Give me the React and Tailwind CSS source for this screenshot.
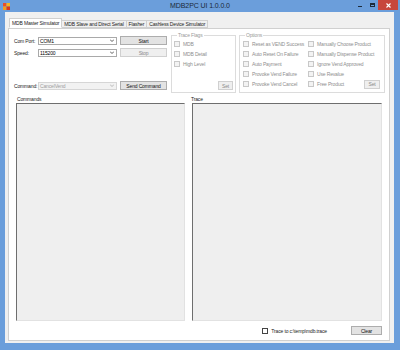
import React from 'react';

const Check = ({ label, disabled }) => (
  <div className="flex items-center gap-[3px] h-[10px] whitespace-nowrap">
    <span className={`w-[6px] h-[6px] border shrink-0 ${disabled ? 'border-[#c8c8c8] bg-[#f3f3f3]' : 'border-[#444] bg-white'}`} />
    <span className={disabled ? 'text-[#8e8e8e]' : 'text-[#222]'}>{label}</span>
  </div>
);

const Combo = ({ value, disabled }) => (
  <div className={`w-[79px] h-[8px] flex items-center justify-between border pl-[1px] pr-[2px] ${disabled ? 'border-[#d6d6d6] bg-[#f2f2f2] text-[#9d9d9d]' : 'border-[#a9a9a9] bg-white text-black'}`}>
    <span>{value}</span>
    <svg width="4" height="3" viewBox="0 0 4 3">
      <path d="M0 0.5 L2 2.5 L4 0.5" fill="none" stroke={disabled ? '#aaa' : '#333'} strokeWidth="0.8" />
    </svg>
  </div>
);

const Btn = ({ children, disabled, className = '' }) => (
  <div className={`flex items-center justify-center border ${disabled ? 'border-[#d0d0d0] bg-[#efefef] text-[#8a8a8a]' : 'border-[#adadad] bg-[#e3e3e3] text-[#111]'} ${className}`}>
    {children}
  </div>
);

const Tab = ({ children, active }) => (
  <div className={`border border-[#d0d0d0] px-[2px] flex items-center whitespace-nowrap ${active ? 'h-[10px] bg-white border-b-white -mb-[1px] relative z-10' : 'h-[8px] mt-[2px] bg-[#f0f0f0] -ml-[1px]'}`}>
    {children}
  </div>
);

export default function App() {
  return (
    <div className="w-[400px] h-[350px] bg-[#6b9edb] flex flex-col font-['Liberation_Sans',Arial,sans-serif] text-[5px] leading-[6px] tracking-[-0.15px] text-[#222]">
      {/* title bar */}
      <div className="h-[12px] grid grid-cols-[1fr_auto_1fr] items-center">
        <div className="pl-[3px] flex items-center">
          <svg width="7" height="7" viewBox="0 0 7 7">
            <rect x="0" y="0" width="3.5" height="3.5" fill="#e94e2a" />
            <rect x="3.5" y="0" width="3.5" height="3.5" fill="#f5b521" />
            <rect x="0" y="3.5" width="3.5" height="3.5" fill="#f39c1f" />
            <rect x="3.5" y="3.5" width="3.5" height="3.5" fill="#d8361f" />
          </svg>
        </div>
        <div className="text-[7px] leading-[8px] tracking-[-0.1px] text-[#1c2a3a]">MDB2PC UI 1.0.0.0</div>
        <div className="flex justify-end items-start h-full">
          <div className="w-[12px] h-[9px] flex items-center justify-center">
            <span className="w-[4px] h-[1px] bg-[#1d2b3b] mt-[3px]" />
          </div>
          <div className="w-[12px] h-[9px] flex items-center justify-center">
            <span className="w-[5px] h-[4px] border border-[#1d2b3b] border-t-2" />
          </div>
          <div className="w-[20px] h-[10px] bg-[#c7463c] flex items-center justify-center mr-[2px]">
            <svg width="5" height="5" viewBox="0 0 5 5">
              <path d="M0.5 0.5 L4.5 4.5 M4.5 0.5 L0.5 4.5" stroke="#fff" strokeWidth="1.1" />
            </svg>
          </div>
        </div>
      </div>

      {/* client area */}
      <div className="flex-1 ml-[5px] mr-[6px] mb-[7px] bg-[#f0f0f0] pl-[3px] pr-[4px] pt-[6px] pb-[2px] flex flex-col">
        <div className="flex items-start h-[10px] pl-[1px]">
          <Tab active>MDB Master Simulator</Tab>
          <Tab>MDB Slave and Direct Serial</Tab>
          <Tab>Flasher</Tab>
          <Tab>Cashless Device Simulator</Tab>
        </div>

        <div className="flex-1 border border-[#d0d0d0] bg-white flex flex-col">
          {/* top controls */}
          <div className="flex pl-[5px] pt-[3px]">
            <div className="w-[153px] flex flex-col mt-[4px]">
              <div className="flex items-center h-[9px]">
                <span className="w-[24px]">Com Port:</span>
                <Combo value="COM1" />
                <Btn className="w-[47px] h-[9px] ml-[3px]">Start</Btn>
              </div>
              <div className="flex items-center h-[9px] mt-[3px]">
                <span className="w-[24px]">Speed:</span>
                <Combo value="115200" />
                <Btn disabled className="w-[47px] h-[9px] ml-[3px]">Stop</Btn>
              </div>
              <div className="flex items-center h-[9px] mt-[24px]">
                <span className="w-[24px]">Command:</span>
                <Combo value="CancelVend" disabled />
                <Btn className="w-[47px] h-[9px] ml-[3px]">Send Command</Btn>
              </div>
            </div>

            <fieldset className="w-[65px] h-[61px] ml-[4px] border border-[#dcdcdc] flex flex-col pl-[2px] pr-[2px] pb-[2px]">
              <legend className="ml-[3px] px-[1px] text-[#9a9a9a]">Trace Flags</legend>
              <div className="pt-[1px]">
                <Check label="MDB" disabled />
                <Check label="MDB Detail" disabled />
                <Check label="High Level" disabled />
              </div>
              <Btn disabled className="w-[15px] h-[9px] mt-auto self-end">Set</Btn>
            </fieldset>

            <fieldset className="w-[146px] h-[61px] ml-[3px] border border-[#dcdcdc] pl-[3px] pr-[4px]">
              <legend className="ml-[2px] px-[1px] text-[#9a9a9a]">Options</legend>
              <div className="grid grid-cols-[65px_1fr] pt-[1px]">
                <Check label="Reset as VEND Success" disabled />
                <Check label="Manually Choose Product" disabled />
                <Check label="Auto Reset On Failure" disabled />
                <Check label="Manually Dispense Product" disabled />
                <Check label="Auto Payment" disabled />
                <Check label="Ignore Vend Approved" disabled />
                <Check label="Provoke Vend Failure" disabled />
                <Check label="Use Revalue" disabled />
                <Check label="Provoke Vend Cancel" disabled />
                <div className="flex items-center justify-between">
                  <Check label="Free Product" disabled />
                  <Btn disabled className="w-[16px] h-[9px]">Set</Btn>
                </div>
              </div>
            </fieldset>
          </div>

          {/* lists */}
          <div className="flex-1 flex gap-[7px] px-[7px] mt-[3px]">
            <div className="w-[169px] flex flex-col">
              <span className="h-[6px] ml-[1px]">Commands</span>
              <div className="flex-1 mt-[1px] bg-[#efefef] border-t border-l border-[#6e6e6e] border-r-[#e2e2e2] border-b-[#e2e2e2] border-r border-b" />
            </div>
            <div className="flex-1 flex flex-col">
              <span className="h-[6px] -ml-[1px]">Trace</span>
              <div className="flex-1 mt-[1px] bg-[#efefef] border-t border-l border-[#6e6e6e] border-r-[#e2e2e2] border-b-[#e2e2e2] border-r border-b" />
            </div>
          </div>

          {/* bottom */}
          <div className="flex items-center justify-end h-[9px] mt-[5px] mb-[5px] pr-[7px]">
            <div className="flex items-center gap-[3px]">
              <span className="w-[6px] h-[6px] border border-[#444] bg-white" />
              <span>Trace to c:\temp\mdb.trace</span>
            </div>
            <Btn className="w-[31px] h-[9px] ml-[24px]">Clear</Btn>
          </div>
        </div>
      </div>
    </div>
  );
}
